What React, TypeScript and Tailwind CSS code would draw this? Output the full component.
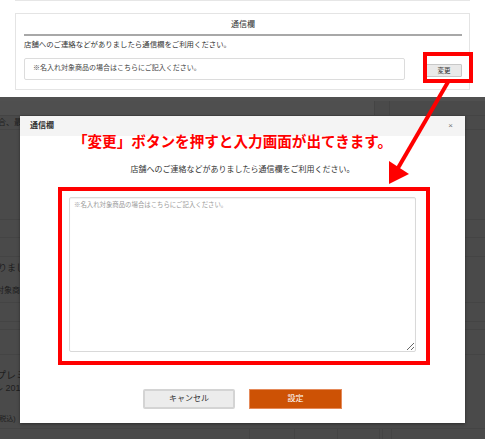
import React from 'react';

const FONT = "font-['Liberation_Sans','Noto_Sans_CJK_JP',sans-serif]";

// faint page content behind the backdrop
const Backdrop: React.FC = () => (
  <div className="flex flex-col h-full">
    <div className="h-[4px] bg-[#505050]" />
    <div className="flex h-[15px] border-b border-[#444]">
      <div className="w-[375px] bg-[#4f4f4f] border-r border-[#444]" />
      <div className="w-[15px] border-r border-[#444]" />
    </div>
    <div className="h-[14px] border-b border-[#444] flex items-center">
      <span className="-ml-[2px] text-[8px] leading-[10px] text-[#1e1e1e]">合、最</span>
    </div>
    <div className="h-[90px] border-b border-[#444]" />
    <div className="h-[18px] border-b border-[#444]" />
    <div className="h-[19px] border-b border-[#444]" />
    <div className="h-[22px] flex items-center">
      <span className="-ml-[2px] text-[9px] leading-[10px] text-[#1e1e1e]">りまし</span>
    </div>
    <div className="h-[24px] border-b border-[#444] flex items-center">
      <span className="-ml-[4px] text-[8px] leading-[10px] text-[#1e1e1e]">対象商</span>
    </div>
    <div className="h-[19px] border-b border-[#444]" />
    <div className="h-[8px] border-b border-[#444]" />
    <div className="h-[25px] border-b border-[#444]" />
    <div className="h-[54px] flex flex-col justify-center gap-[1px]">
      <span className="-ml-[4px] text-[10px] leading-[12px] text-[#1e1e1e]">プレミ</span>
      <span className="-ml-[6px] text-[9px] leading-[11px] text-[#1e1e1e]">ル 2019</span>
    </div>
    <div className="h-[20px] flex items-center border-b border-[#444]">
      <span className="-ml-[3px] text-[7px] leading-[9px] text-[#1e1e1e]">(税込)</span>
    </div>
    <div className="flex-1 flex">
      <div className="w-[250px] border-r border-[#444]" />
      <div className="w-[45px] border-r border-[#444]" />
      <div className="w-[43px] border-r border-[#444]" />
      <div className="w-[42px] border-r border-[#444]" />
      <div className="w-[3px] border-r border-[#444]" />
      <div className="w-[9px] border-r border-[#444]" />
    </div>
  </div>
);

export default function App() {
  return (
    <div className={`relative w-[485px] h-[439px] overflow-hidden bg-white ${FONT}`}>
      {/* Top: the page section */}
      <div className="h-[97px] px-[15px]">
        <div className="h-px bg-[#e6e6e6]" />
        <div className="mt-[12px] h-[77px] border border-[#e4e4e4] pl-[8px] pr-[7px]">
          <div className="h-[20px] pt-[6px] text-center text-[8px] leading-[10px] text-[#333]">通信欄</div>
          <div className="h-[2px] bg-[#a8a8a8]" />
          <div className="mt-[4px] text-[7.4px] leading-[10px] text-[#333]">
            店舗へのご連絡などがありましたら通信欄をご利用ください。
          </div>
          <div className="mt-[8px] flex items-start justify-between">
            <div className="w-[381px] h-[22px] border border-[#dcdcdc] rounded-[2px] pl-[8px] pt-[4px] text-[7px] leading-[9px] text-[#444]">
              ※名入れ対象商品の場合はこちらにご記入ください。
            </div>
            <button className="mt-[6px] w-[36px] h-[13px] bg-[#e9e9e9] border border-[#c8c8c8] rounded-[1px] text-[6.5px] leading-[11px] text-[#333]">
              変更
            </button>
          </div>
        </div>
      </div>

      {/* Bottom: the modal over the dimmed page */}
      <div className="relative h-[342px] bg-[#4a4a4a]">
        <Backdrop />

        <div className="absolute left-[20px] top-[19px] w-[445px] h-[307px] bg-white shadow-[0_1px_3px_rgba(0,0,0,0.4)]">
          <div className="h-[20px] bg-[#f4f4f4] pl-[10px] pr-[12px] flex items-center justify-between">
            <span className="text-[8px] leading-[10px] font-bold text-[#333]">通信欄</span>
            <span className="text-[8px] leading-[10px] text-[#777]">×</span>
          </div>

          <div className="-mt-[2px] h-[16px] pr-[20px] flex justify-center text-[14.6px] leading-[16px] font-bold text-[#ff0000] whitespace-nowrap">
            「変更」ボタンを押すと入力画面が出てきます。
          </div>

          <div className="mt-[15px] text-center text-[8px] leading-[10px] text-[#333]">
            店舗へのご連絡などがありましたら通信欄をご利用ください。
          </div>

          <div className="mt-[12px] ml-[38px] w-[372px] h-[178px] border-4 border-[#ff0000] pl-[7px] pt-[6px]">
            <textarea
              readOnly
              placeholder="※名入れ対象商品の場合はこちらにご記入ください。"
              className="block w-[347px] h-[155px] border border-[#d9d9d9] rounded-[2px] px-[4px] py-[3px] text-[6.4px] leading-[8px] text-[#333] placeholder:text-[#999] shadow-[inset_0_1px_1px_rgba(0,0,0,0.06)] outline-none"
            />
          </div>

          <div className="mt-[24px] flex justify-center gap-[14px]">
            <button className="w-[92px] h-[20px] bg-[#ececec] border-2 border-[#d4d4d4] rounded-[2px] text-[8px] leading-[10px] text-[#333]">
              キャンセル
            </button>
            <button className="w-[93px] h-[20px] bg-[#cd5205] border border-[#e58a5a] text-[8px] leading-[10px] text-white">
              設定
            </button>
          </div>
        </div>
      </div>

      {/* Annotation: red frame round the button */}
      <div className="absolute left-[423px] top-[52px] w-[50px] h-[31px] border-4 border-[#ff0000] pointer-events-none" />

      {/* Annotation: red arrow */}
      <svg className="absolute inset-0 pointer-events-none" width="485" height="439" viewBox="0 0 485 439">
        <line x1="448" y1="82" x2="398" y2="168" stroke="#ff0000" strokeWidth="4" />
        <polygon points="389,184 389,161 409,174" fill="#ff0000" />
      </svg>
    </div>
  );
}
